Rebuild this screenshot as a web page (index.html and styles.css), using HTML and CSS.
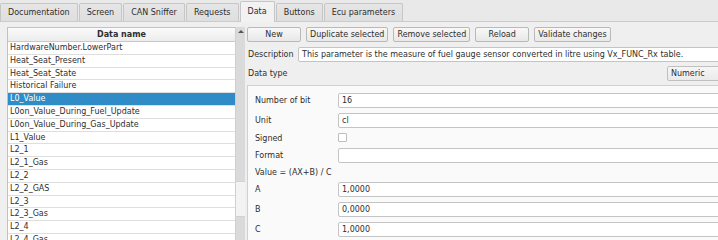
FILE: index.html
```html
<!DOCTYPE html>
<html lang="en">
<head>
    <meta charset="UTF-8">
    <meta name="viewport" content="width=device-width, initial-scale=1.0">
    <title>Data</title>
    <link rel="stylesheet" href="styles.css">
</head>
<body>

    <div id="tab-bar">
        <div class="tab">Documentation</div>
        <div class="tab">Screen</div>
        <div class="tab">CAN Sniffer</div>
        <div class="tab">Requests</div>
        <div class="tab active">Data</div>
        <div class="tab">Buttons</div>
        <div class="tab">Ecu parameters</div>
    </div>

    <div id="pane">
        <div id="list-side">
            <div id="data-table">
                <div class="table-header">Data name</div>
                <div class="row">HardwareNumber.LowerPart</div>
                <div class="row">Heat_Seat_Present</div>
                <div class="row">Heat_Seat_State</div>
                <div class="row">Historical Failure</div>
                <div class="row selected">L0_Value</div>
                <div class="row">L0on_Value_During_Fuel_Update</div>
                <div class="row">L0on_Value_During_Gas_Update</div>
                <div class="row">L1_Value</div>
                <div class="row">L2_1</div>
                <div class="row">L2_1_Gas</div>
                <div class="row">L2_2</div>
                <div class="row">L2_2_GAS</div>
                <div class="row">L2_3</div>
                <div class="row">L2_3_Gas</div>
                <div class="row">L2_4</div>
                <div class="row">L2_4_Gas</div>
            </div>
            <div class="scrollbar">
                <div class="scroll-up"></div>
                <div class="scroll-handle"></div>
            </div>
        </div>

        <div id="editor">
            <div id="toolbar">
                <button class="tool-button">New</button>
                <button class="tool-button">Duplicate selected</button>
                <button class="tool-button">Remove selected</button>
                <button class="tool-button">Reload</button>
                <button class="tool-button">Validate changes</button>
            </div>

            <div class="form-row">
                <span class="label">Description</span>
                <div class="field wide">This parameter is the measure of fuel gauge sensor converted in litre using Vx_FUNC_Rx table.</div>
            </div>

            <div class="form-row type-row">
                <span class="label">Data type</span>
                <div class="combo">Numeric</div>
            </div>

            <div id="params">
                <span class="label">Number of bit</span>
                <div class="field">16</div>
                <span class="label">Unit</span>
                <div class="field">cl</div>
                <span class="label">Signed</span>
                <div class="check-cell"><div class="checkbox"></div></div>
                <span class="label">Format</span>
                <div class="field"></div>
                <span class="label formula">Value = (AX+B) / C</span>
                <span class="label">A</span>
                <div class="field">1,0000</div>
                <span class="label">B</span>
                <div class="field">0,0000</div>
                <span class="label">C</span>
                <div class="field">1,0000</div>
            </div>
        </div>
    </div>

</body>
</html>
```

FILE: styles.css
```css
body {
    margin: 0;
    width: 718px;
    height: 240px;
    overflow: hidden;
    background: #efefef;
    font-family: "DejaVu Sans", sans-serif;
    font-size: 8px;
    color: #2e2e2e;
}

#tab-bar {
    display: flex;
    gap: 1px;
    height: 21px;
    align-items: flex-end;
    background: #e9e9e9;
}

.tab {
    height: 18px;
    line-height: 17px;
    padding: 0 7px;
    background: linear-gradient(#e6e6e6, #dedede);
    border: 1px solid #c6c6c6;
    border-bottom: none;
    border-radius: 2px 2px 0 0;
    box-sizing: border-box;
}

.tab.active {
    height: 21px;
    line-height: 20px;
    background: #f2f2f2;
    margin-bottom: -1px;
}

#pane {
    display: flex;
    border-top: 1px solid #cbcbcb;
    padding: 5px 0 0 7px;
    height: 240px;
}

#list-side {
    display: flex;
    width: 238px;
    flex-shrink: 0;
}

#data-table {
    width: 228px;
    border: 1px solid #c2c2c2;
    border-right: none;
    background: #ffffff;
    box-sizing: border-box;
}

.table-header {
    height: 13px;
    line-height: 13px;
    text-align: center;
    font-weight: bold;
    background: linear-gradient(#fbfbfb, #ececec);
    border-bottom: 1px solid #c8c8c8;
}

.row {
    height: 12.8px;
    line-height: 12px;
    padding-left: 2px;
    border-bottom: 1px solid #dedede;
    box-sizing: border-box;
    white-space: nowrap;
}

.row.selected {
    background: #308cc6;
    color: #ffffff;
}

.scrollbar {
    width: 10px;
    background: #dadada;
    border-left: 1px solid #cfcfcf;
    box-sizing: border-box;
}

.scroll-up {
    width: 0;
    height: 0;
    margin: 3px auto 148px;
    border-left: 3px solid transparent;
    border-right: 3px solid transparent;
    border-bottom: 3px solid #555555;
}

.scroll-handle {
    height: 34px;
    background: #f3f3f3;
    border-top: 1px solid #d2d2d2;
    border-bottom: 1px solid #d2d2d2;
}

#editor {
    width: 520px;
    margin-left: 2px;
    flex-shrink: 0;
}

#toolbar {
    display: flex;
    gap: 5px;
    height: 15px;
}

.tool-button {
    min-width: 54px;
    height: 15px;
    padding: 0 3px;
    font-family: inherit;
    font-size: 8px;
    color: #2e2e2e;
    background: linear-gradient(#f8f8f8, #e8e8e8);
    border: 1px solid #b9b9b9;
    border-radius: 2px;
}

.form-row {
    display: flex;
    align-items: center;
    margin-top: 5px;
    padding-left: 1px;
}

.form-row .label {
    width: 50px;
}

.field {
    height: 15px;
    line-height: 14px;
    padding-left: 3px;
    background: #ffffff;
    border: 1px solid #c4c4c4;
    border-radius: 2px;
    box-sizing: border-box;
    white-space: nowrap;
}

.field.wide {
    flex: 1;
}

.type-row {
    margin-top: 4px;
}

.combo {
    margin-left: auto;
    width: 100px;
    height: 15px;
    line-height: 14px;
    padding-left: 3px;
    background: linear-gradient(#f6f6f6, #eaeaea);
    border: 1px solid #c0c0c0;
    border-radius: 2px;
    box-sizing: border-box;
}

#params {
    display: grid;
    grid-template-columns: 83px 1fr;
    grid-template-rows: 15px 15px 10px 15px 9px 15px 15px 15px;
    row-gap: 5px;
    align-items: center;
    margin-top: 4px;
    padding: 7px 0 8px 7px;
    background: #fafafa;
    border: 1px solid #d0d0d0;
}

.label.formula {
    grid-column: 1 / 3;
}

.check-cell {
    height: 10px;
}

.checkbox {
    width: 9px;
    height: 9px;
    background: #ffffff;
    border: 1px solid #bcbcbc;
    border-radius: 1px;
    box-sizing: border-box;
}
```
